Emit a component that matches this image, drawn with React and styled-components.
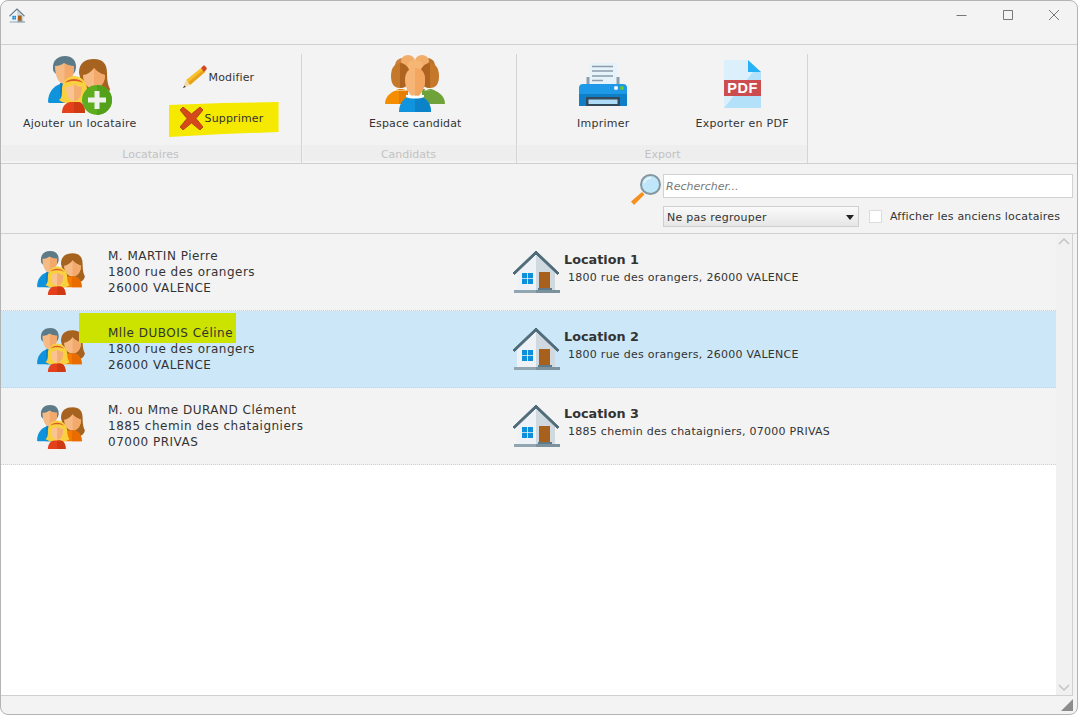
import React from "react";
import styled, { createGlobalStyle } from "styled-components";

const Global = createGlobalStyle`
  html, body { margin: 0; padding: 0; background: #fff; }
  * { box-sizing: border-box; }
`;

const Window = styled.div`
  width: 1078px;
  height: 715px;
  display: flex;
  flex-direction: column;
  background: #f3f3f3;
  border: 1px solid #b4b4b4;
  border-radius: 8px;
  overflow: hidden;
  font-family: "DejaVu Sans", Verdana, sans-serif;
  color: #333;
`;
const TitleBar = styled.div`
  height: 44px;
  flex: none;
  display: flex;
  justify-content: space-between;
  border-bottom: 1px solid #d0d0d0;
  padding: 7px 0 0 8px;
`;
const Controls = styled.div`
  display: flex;
  margin-top: -1px;
  padding-right: 15px;
  gap: 30px;
`;
const Ribbon = styled.div`
  height: 119px;
  flex: none;
  display: flex;
  padding-top: 9px;
  border-bottom: 1px solid #d0d0d0;
`;
const Group = styled.div`
  width: ${(p) => p.$width}px;
  display: flex;
  flex-direction: column;
  border-right: 1px solid #d4d4d4;
  padding-left: 1px;
`;
const GroupBody = styled.div`
  height: 91px;
  display: flex;
  padding-left: ${(p) => p.$pad}px;
  gap: ${(p) => p.$gap}px;
`;
const GroupLabel = styled.div`
  height: 16px;
  background: #eeeeee;
  color: #c2c2c2;
  font-size: 11px;
  line-height: 20px;
  text-align: center;
  padding-right: ${(p) => p.$shift || 0}px;
`;
const LargeButton = styled.div`
  display: flex;
  flex-direction: column;
  align-items: center;
  font-size: 11px;
  letter-spacing: ${(p) => p.$spacing ?? 0.25}px;
  white-space: nowrap;
`;
const IconSlot = styled.div`
  height: 62px;
  padding-top: ${(p) => p.$top}px;
  line-height: 0;
  margin-bottom: 1px;
`;
const SmallColumn = styled.div`
  display: flex;
  flex-direction: column;
  padding-top: 11px;
  gap: 13px;
`;
const SmallButton = styled.div`
  position: relative;
  height: ${(p) => p.$height}px;
  display: flex;
  align-items: center;
  padding-left: ${(p) => p.$pad}px;
  padding-bottom: ${(p) => p.$lift || 0}px;
  font-size: 11px;
  letter-spacing: 0.15px;
  gap: ${(p) => p.$gap}px;
  white-space: nowrap;
`;
const Marker = styled.span`
  position: absolute;
  left: ${(p) => p.$left}px;
  top: ${(p) => p.$topOffset}px;
  width: ${(p) => p.$w}px;
  height: ${(p) => p.$h}px;
  background: ${(p) => p.$color};
  clip-path: ${(p) => p.$clip || "none"};
`;
const Front = styled.span`
  position: relative;
  display: inline-flex;
`;
const SearchPanel = styled.div`
  height: 70px;
  flex: none;
  display: flex;
  flex-direction: column;
  align-items: flex-end;
  padding: 10px 4px 0 0;
  border-bottom: 1px solid #d0d0d0;
`;
const SearchRow = styled.div`
  display: flex;
  gap: 2px;
  width: 442px;
  height: 24px;
`;
const SearchInput = styled.div`
  flex: 1;
  background: #fff;
  border: 1px solid #d2d2d2;
  font-size: 11px;
  font-style: italic;
  color: #777;
  padding: 0 0 0 2px;
  line-height: 24px;
`;
const FilterRow = styled.div`
  display: flex;
  align-items: center;
  width: 410px;
  margin-top: 8px;
  height: 21px;
`;
const Select = styled.div`
  width: 196px;
  height: 21px;
  display: flex;
  align-items: center;
  justify-content: space-between;
  padding: 1px 4px 0 3px;
  border: 1px solid #cfcfcf;
  background: linear-gradient(#fafafa, #e6e6e6);
  font-size: 11px;
  letter-spacing: 0.25px;
`;
const Caret = styled.span`
  width: 0;
  height: 0;
  border-left: 4px solid transparent;
  border-right: 4px solid transparent;
  border-top: 5px solid #222;
`;
const Check = styled.span`
  width: 13px;
  height: 13px;
  margin: 0 8px 0 10px;
  background: #fff;
  border: 1px solid #dcdcdc;
`;
const CheckLabel = styled.span`
  font-size: 11px;
  letter-spacing: 0.2px;
`;
const ListArea = styled.div`
  flex: 1;
  display: flex;
  background: #fff;
  border-right: 1px solid #d0d0d0;
  border-bottom: 1px solid #d0d0d0;
  margin-right: 4px;
  min-height: 0;
`;
const Rows = styled.div`
  flex: 1;
`;
const Row = styled.div`
  height: 77px;
  display: flex;
  background: ${(p) => (p.$selected ? "#cce8f8" : "#f3f3f3")};
  border-bottom: 1px dotted #cfcfcf;
`;
const TenantCell = styled.div`
  width: 511px;
  display: flex;
  align-items: center;
  gap: 23px;
  padding: 2px 0 0 36px;
`;
const TenantLines = styled.div`
  position: relative;
  font-size: 12px;
  letter-spacing: 0.5px;
  line-height: 16px;
  margin-top: -2px;
`;
const LocationCell = styled.div`
  display: flex;
  align-items: flex-start;
  gap: 4px;
  padding-top: 16px;
`;
const LocationText = styled.div`
  padding-top: 2px;
`;
const LocationTitle = styled.div`
  font-size: 12.8px;
  font-weight: bold;
  line-height: 16px;
`;
const LocationAddress = styled.div`
  font-size: 11px;
  letter-spacing: 0.27px;
  line-height: 16px;
  margin: 2px 0 0 4px;
`;
const Scrollbar = styled.div`
  width: 16px;
  flex: none;
  background: #f1f1f1;
  display: flex;
  flex-direction: column;
  justify-content: space-between;
  align-items: center;
  padding: 4px 0;
`;
const StatusBar = styled.div`
  height: 18px;
  flex: none;
  display: flex;
  justify-content: flex-end;
  align-items: flex-end;
  padding: 0 4px 3px 0;
`;

const FamilyIcon = ({ width, height, plus }) => (
  <svg width={width} height={height} viewBox={plus ? "18 11 64 60" : "18 11 62 57"}>
    {/* man */}
    <path d="M18 57c0-10 6-16 12-18h6c5 2 8 6 9 10v9H22c-2 0-4 0-4-1z" fill="#0e93dc" />
    <path d="M30 58V38h6c5 2 8 6 9 10v10z" fill="#0d7fc4" />
    <path d="M23 22c0-7 5-11 12-11s11 4 11 11c0 2-1 5-2 6l-1 1H26l-2-2c-1-1-1-3-1-5z" fill="#5d7a88" />
    <path d="M25 21c3 0 7-1 9-3 3 2 6 3 10 3 0 9-3 18-9.500 18S25 30 25 21z" fill="#f6bb84" />
    <path d="M34.500 18.500c3 2 5.500 2.500 9.500 2.500 0 9-3 18-9.500 18z" fill="#f3a96b" />
    {/* woman */}
    <path d="M49 28c0-10 6-14 15-14s13 5 13 14c0 8 1 12 3 16-1 4-4 7-8 8H55z" fill="#a5631f" />
    <path d="M53 30c4 0 8-3 11-7 2 3 7 6 11 7 0 8-5 14-11 14s-11-6-11-14z" fill="#f6bb84" />
    <path d="M64 23c2 3 7 6 11 7 0 8-5 14-11 14z" fill="#f3a96b" />
    <path d="M46 58c0-8 6-13 12-14h10c4 2 8 6 8 14z" fill="#f57c00" />
    <path d="M63 44h5c4 2 8 6 8 14H63z" fill="#e96c00" />
    {/* girl */}
    <path d="M29 55c3-2 3-6 3-11 0-8 6-13 12-13s13 5 13 13c0 5 1 9 3 11-2 2-6 3-7 3H36c-1 0-5-1-7-3z" fill="#f9d040" />
    <path d="M36 42c3 0 6-1 8-3 2 2 5 3 8 3 0 8-3 14-8 14s-8-6-8-14z" fill="#f9c491" />
    <path d="M44 39c2 2 5 3 8 3 0 8-3 14-8 14z" fill="#f5ae72" />
    <path d="M35 38c2-3 5-4 9-4s7 1 9 4c-3-1.500-6-2-9-2s-6 .5-9 2z" fill="#dc5a2a" />
    <path d="M32 68c0-7 4-11 9-11h7c4 0 7 4 7 11z" fill="#e5401c" />
    <path d="M44 57h4c4 0 7 4 7 11H44z" fill="#cf3a12" />
    {plus && (
      <>
        <circle cx="67" cy="55" r="15" fill="#5fad1f" />
        <path d="M67 40a15 15 0 0 1 0 30z" fill="#53a01a" />
        <path d="M64.500 46h5v6.500H76v5h-6.500V64h-5v-6.500H58v-5h6.500z" fill="#eef2ea" />
      </>
    )}
  </svg>
);

const CandidatesIcon = () => (
  <svg width="60" height="58" viewBox="10 10 60 58">
    <ellipse cx="28" cy="20" rx="8" ry="7" fill="#c9813d" />
    <ellipse cx="52" cy="20" rx="8" ry="7" fill="#b8732d" />
    <ellipse cx="33" cy="16" rx="7" ry="6" fill="#f2ad6b" />
    <ellipse cx="47" cy="16" rx="7" ry="6" fill="#f2ad6b" />
    <ellipse cx="40" cy="21" rx="8" ry="6" fill="#f6b674" />
    <path d="M10 59c0-9 8-13 14-15h9v15z" fill="#f58d00" />
    <path d="M24 44h9v15h-9z" fill="#e67e00" />
    <path d="M70 59c0-9-8-13-14-15h-9v15z" fill="#6fa23a" />
    <path d="M19 43.500c3 2 9 2 12 0l2 2H18zM49 45.500l2-2c3 2 9 2 12 0l1 1z" fill="#fff" />
    <path d="M16 31c0-8 4-13 9-13s10 5 10 13-4 12-10 12-9-4-9-12z" fill="#c5772a" />
    <path d="M25 18c5 0 10 5 10 13s-4 12-10 12z" fill="#ae6420" />
    <path d="M64 31c0-8-4-13-9-13s-10 5-10 13 4 12 10 12 9-4 9-12z" fill="#c5772a" />
    <path d="M55 18c-5 0-10 5-10 13s4 12 10 12z" fill="#ae6420" />
    <path d="M24 67c0-10 6-15 12-16h8c6 1 12 6 12 16z" fill="#1094de" />
    <path d="M40 51.500h4c6 1 12 6 12 15.500H40z" fill="#0c82c9" />
    <path d="M31 50h18v2c-4 2-14 2-18 0z" fill="#fff" />
    <path d="M30 35c0-8 4-12 10-12s10 4 10 12c0 7-3 12-6 15.500h-8c-3-3.500-6-8.500-6-15.500z" fill="#f6b477" />
    <path d="M40 23c6 0 10 4 10 12 0 7-3 12-6 15.500h-4z" fill="#f3a65f" />
  </svg>
);

const HouseIcon = ({ width = 48, height = 44 }) => (
  <svg width={width} height={height} viewBox="7 6 48 44">
    <path d="M12 28 31 10l19 18v18H12z" fill="#eef2f6" />
    <path d="M31 10l19 18v18H31z" fill="#cfd9df" />
    <path d="M8 29 31 7l23 22-1.500 1.500L31 10 9.500 30.500z" fill="#4f6a78" stroke="#4f6a78" />
    <rect x="17" y="29" width="11" height="11" fill="#0e8fdc" />
    <path d="M22.200 29h.8v11h-.8zM17 34.200h11v.8H17z" fill="#eef2f6" />
    <rect x="34" y="28" width="11" height="16" fill="#a8611c" />
    <rect x="33" y="44" width="14" height="2" fill="#5f7a88" />
    <rect x="9" y="46" width="22" height="3" fill="#92a6b1" />
    <rect x="31" y="46" width="24" height="3" fill="#7b929e" />
  </svg>
);

const PrinterIcon = () => (
  <svg width="48" height="43" viewBox="10 13 48 43">
    <rect x="20" y="13" width="28" height="24" fill="#e7f3fb" />
    <path d="M23 16.500h21M23 21h21M23 26h21M23 30.500h11" stroke="#8b9dab" strokeWidth="1.300" />
    <rect x="17.500" y="27" width="3" height="9" fill="#8b9dab" />
    <rect x="47.500" y="27" width="3" height="9" fill="#8b9dab" />
    <path d="M14 34h40a4 4 0 0 1 4 4v18H10V38a4 4 0 0 1 4-4z" fill="#1d99e8" />
    <path d="M10 44h48v12H10z" fill="#0f7fc7" />
    <rect x="17" y="47" width="34" height="9" fill="#34495a" />
    <rect x="19.500" y="49.500" width="29" height="4.500" fill="#aedcf6" />
    <circle cx="47" cy="38" r="2" fill="#fff" />
    <circle cx="53" cy="38" r="2" fill="#6cc91e" />
  </svg>
);

const PdfIcon = () => (
  <svg width="37" height="48" viewBox="0 0 37 48">
    <path d="M0 0h24l13 12v36H0z" fill="#dcf0fb" />
    <path d="M0 48 29 12h8v36z" fill="#b3e1fa" />
    <path d="M24 0l13 12H24z" fill="#28b2f5" />
    <rect x="0" y="20" width="37" height="16" fill="#cc4d50" />
    <text
      x="18.500"
      y="33"
      fontFamily="Liberation Sans, sans-serif"
      fontWeight="bold"
      fontSize="14.500"
      letterSpacing="0.500"
      textAnchor="middle"
      fill="#fff"
    >
      PDF
    </text>
  </svg>
);

const PencilIcon = () => (
  <svg width="25" height="24" viewBox="0 0 25 24">
    <path d="M4 15 19 3l4 4L8 20z" fill="#f6c12d" />
    <path d="M6 17.500 21 5l2 2L8 20z" fill="#e8a31c" />
    <path d="M19 3l2-2c1-1 2 0 3 1s1 2 0 3l-2 2z" fill="#d2481c" />
    <path d="M4 15l4 5-7 3z" fill="#f5d9a8" />
    <path d="M2.500 20.500 3.800 22 .8 23z" fill="#333" />
  </svg>
);

const CrossIcon = () => (
  <svg width="23" height="23" viewBox="0 0 23 23">
    <path
      d="M3 0 11.500 7 20 0l3 3-7 8.500L23 20l-3 3-8.500-7L3 23l-3-3 7-8.500L0 3z"
      fill="#d5481b"
      stroke="#a8380f"
      strokeWidth="0.800"
    />
  </svg>
);

const MagnifierIcon = () => (
  <svg width="30" height="31" viewBox="0 0 30 31">
    <path d="M11 18 0 27.500 3 31 13.500 20.500z" fill="#f58f1e" />
    <circle cx="19.500" cy="10.500" r="9.500" fill="#c0e6fa" stroke="#83979f" strokeWidth="2" />
    <path d="M13 9c1-3 4-5 7-5" stroke="#eef8fd" strokeWidth="1.500" fill="none" />
  </svg>
);

const WindowGlyph = ({ d }) => (
  <svg width="16" height="16" viewBox="0 0 16 16" fill="none" stroke="#777" strokeWidth="1">
    <path d={d} />
  </svg>
);

const Chevron = ({ d }) => (
  <svg width="12" height="7" viewBox="0 0 12 7" fill="none" stroke="#c4c4c4" strokeWidth="1.500">
    <path d={d} />
  </svg>
);

const rows = [
  {
    name: "M. MARTIN Pierre",
    street: "1800 rue des orangers",
    city: "26000 VALENCE",
    title: "Location 1",
    address: "1800 rue des orangers, 26000 VALENCE",
  },
  {
    name: "Mlle DUBOIS Céline",
    street: "1800 rue des orangers",
    city: "26000 VALENCE",
    title: "Location 2",
    address: "1800 rue des orangers, 26000 VALENCE",
    selected: true,
  },
  {
    name: "M. ou Mme DURAND Clément",
    street: "1885 chemin des chataigniers",
    city: "07000 PRIVAS",
    title: "Location 3",
    address: "1885 chemin des chataigniers, 07000 PRIVAS",
  },
];

export default function App() {
  return (
    <Window>
      <Global />
      <TitleBar>
        <HouseIcon width={16} height={15} />
        <Controls>
          <WindowGlyph d="M2.500 8.500h10" />
          <WindowGlyph d="M3.500 3.500h9v9h-9z" />
          <WindowGlyph d="M3 3l10 10M13 3 3 13" />
        </Controls>
      </TitleBar>

      <Ribbon>
        <Group $width={301}>
          <GroupBody $pad={21} $gap={32}>
            <LargeButton>
              <IconSlot $top={2}>
                <FamilyIcon width={64} height={60} plus />
              </IconSlot>
              Ajouter un locataire
            </LargeButton>
            <SmallColumn>
              <SmallButton $height={24} $pad={13} $gap={2}>
                <PencilIcon />
                Modifier
              </SmallButton>
              <SmallButton $height={35} $pad={11} $gap={2} $lift={2}>
                <Marker
                  $left={0}
                  $topOffset={0}
                  $w={110}
                  $h={35}
                  $color="#f5e900"
                  $clip="polygon(0 3px, 50% 1px, 100% 0, 100% 30px, 50% 32px, 0 35px)"
                />
                <Front>
                  <CrossIcon />
                </Front>
                <Front>Supprimer</Front>
              </SmallButton>
            </SmallColumn>
          </GroupBody>
          <GroupLabel $shift={2}>Locataires</GroupLabel>
        </Group>

        <Group $width={215}>
          <GroupBody $pad={66} $gap={0}>
            <LargeButton $spacing={0.13}>
              <IconSlot $top={1}>
                <CandidatesIcon />
              </IconSlot>
              Espace candidat
            </LargeButton>
          </GroupBody>
          <GroupLabel $shift={2}>Candidats</GroupLabel>
        </Group>

        <Group $width={291}>
          <GroupBody $pad={59} $gap={66}>
            <LargeButton>
              <IconSlot $top={9}>
                <PrinterIcon />
              </IconSlot>
              Imprimer
            </LargeButton>
            <LargeButton>
              <IconSlot $top={6}>
                <PdfIcon />
              </IconSlot>
              Exporter en PDF
            </LargeButton>
          </GroupBody>
          <GroupLabel $shift={0}>Export</GroupLabel>
        </Group>
      </Ribbon>

      <SearchPanel>
        <SearchRow>
          <MagnifierIcon />
          <SearchInput>Rechercher...</SearchInput>
        </SearchRow>
        <FilterRow>
          <Select>
            Ne pas regrouper
            <Caret />
          </Select>
          <Check />
          <CheckLabel>Afficher les anciens locataires</CheckLabel>
        </FilterRow>
      </SearchPanel>

      <ListArea>
        <Rows>
          {rows.map((r) => (
            <Row key={r.title} $selected={r.selected}>
              <TenantCell>
                <FamilyIcon width={48} height={44} />
                <TenantLines>
                  {r.selected && (
                    <Marker $left={-29} $topOffset={-12} $w={157} $h={30} $color="#cce300" />
                  )}
                  <Front>{r.name}</Front>
                  <div>{r.street}</div>
                  <div>{r.city}</div>
                </TenantLines>
              </TenantCell>
              <LocationCell>
                <HouseIcon />
                <LocationText>
                  <LocationTitle>{r.title}</LocationTitle>
                  <LocationAddress>{r.address}</LocationAddress>
                </LocationText>
              </LocationCell>
            </Row>
          ))}
        </Rows>
        <Scrollbar>
          <Chevron d="M1 6l5-5 5 5" />
          <Chevron d="M1 1l5 5 5-5" />
        </Scrollbar>
      </ListArea>

      <StatusBar>
        <svg width="12" height="12" viewBox="0 0 12 12">
          <path d="M12 0v12H0z" fill="#8c8c8c" />
        </svg>
      </StatusBar>
    </Window>
  );
}
